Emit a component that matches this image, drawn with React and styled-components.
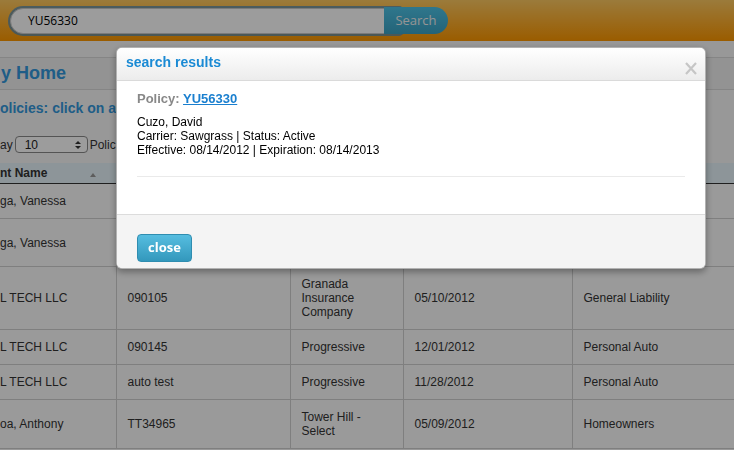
import styled, { createGlobalStyle } from "styled-components";

const GlobalStyle = createGlobalStyle`
  html, body {
    margin: 0;
    padding: 0;
    overflow: hidden;
    background: #f8f8f8;
    font-family: "Liberation Sans", Arial, sans-serif;
  }
`;

const Page = styled.div`
  width: 734px;
  height: 450px;
  overflow: hidden;
  background: #f8f8f8;
`;

const TopBar = styled.header`
  height: 41px;
  display: flex;
  align-items: center;
  padding-left: 10px;
  background: linear-gradient(#fec961, #fc9700);
`;

const SearchField = styled.div`
  width: 392px;
  height: 26px;
  display: flex;
  align-items: center;
  padding-left: 17px;
  box-sizing: border-box;
  background: #fff;
  border: 1px solid #c9c9c9;
  border-radius: 13px 3px 3px 13px;
  box-shadow: 0 0 0 2px rgba(90, 140, 175, 0.8);
  font-family: "Open Sans", sans-serif;
  font-size: 12px;
  color: #000;
`;

const SearchButton = styled.button`
  position: relative;
  margin-left: -18px;
  width: 64px;
  height: 27px;
  border: 0;
  border-radius: 0 14px 14px 0;
  background: linear-gradient(#4ec3e6, #3aa2c4);
  color: #f2f2f2;
  font-family: "Open Sans", sans-serif;
  font-size: 13px;
  padding: 0 0 1px;
`;

const Content = styled.main`
  padding-top: 16px;
`;

const TitleBar = styled.div`
  height: 31px;
  display: flex;
  align-items: center;
  background: #f0f0f0;
  border-top: 1px solid #d9d9d9;
  border-bottom: 1px solid #d9d9d9;
`;

const PageTitle = styled.h1`
  margin: 0;
  font-size: 18px;
  font-weight: bold;
  color: #3399dd;
  padding-left: 1px;
`;

const Subtitle = styled.h2`
  margin: 9px 0 0;
  font-size: 14px;
  line-height: 18px;
  font-weight: bold;
  color: #3399dd;
`;

const DisplayRow = styled.div`
  margin-top: 18px;
  height: 19px;
  display: flex;
  align-items: center;
  gap: 2px;
  font-size: 12px;
  color: #333;
`;

const SelectBox = styled.div`
  width: 73px;
  height: 17px;
  box-sizing: border-box;
  display: flex;
  align-items: center;
  justify-content: space-between;
  padding: 0 6px 0 9px;
  background: #fff;
  border: 1px solid #8a8a8a;
  border-radius: 4px;
  font-size: 12px;
  color: #222;
`;

const Arrows = styled.span`
  display: flex;
  flex-direction: column;
  gap: 2px;

  &::before,
  &::after {
    content: "";
    border-left: 3px solid transparent;
    border-right: 3px solid transparent;
  }
  &::before {
    border-bottom: 3px solid #333;
  }
  &::after {
    border-top: 3px solid #333;
  }
`;

const Table = styled.table`
  margin-top: 9px;
  border-collapse: collapse;
  width: 800px;
  table-layout: fixed;
  font-size: 12px;
  color: #333;
`;

const Th = styled.th`
  height: 20px;
  padding: 0;
  text-align: left;
  font-weight: bold;
  background: #e6f4fa;
  border-bottom: 1px solid #333;
`;

const HeadInner = styled.div`
  display: flex;
  align-items: center;
  justify-content: space-between;
  padding-right: 20px;
`;

const SortUp = styled.span`
  width: 0;
  height: 0;
  margin-top: 3px;
  border-left: 3px solid transparent;
  border-right: 3px solid transparent;
  border-bottom: 4px solid #999;
`;

const Tr = styled.tr`
  height: ${(p) => p.$h || 35}px;
`;

const Td = styled.td`
  padding: 10px 11px;
  line-height: 14px;
  vertical-align: middle;
  border: 1px solid #d0d0d0;
  border-top: 0;
  background: #fcfcfc;

  &:first-child {
    padding-left: 0;
    border-left: 0;
  }
`;

const Backdrop = styled.div`
  position: fixed;
  inset: 0;
  background: rgba(0, 0, 0, 0.39);
`;

const Modal = styled.div`
  position: fixed;
  top: 47px;
  left: 116px;
  width: 590px;
  box-sizing: border-box;
  background: #fff;
  border: 1px solid rgba(0, 0, 0, 0.3);
  border-radius: 6px;
  box-shadow: 0 3px 7px rgba(0, 0, 0, 0.35);
  overflow: hidden;
  font-family: "Liberation Sans", Arial, sans-serif;
`;

const ModalHeader = styled.div`
  height: 32px;
  display: flex;
  align-items: center;
  justify-content: space-between;
  padding: 0 8px 0 9px;
  background: linear-gradient(#ffffff, #ececec);
  border-bottom: 1px solid #dadada;
`;

const ModalTitle = styled.h3`
  margin: 0 0 5px;
  font-size: 14px;
  font-weight: bold;
  color: #1a8ad4;
`;

const CloseX = styled.svg`
  width: 12px;
  height: 13px;
  margin-top: 9px;
`;

const ModalBody = styled.div`
  padding: 9px 20px 37px;
`;

const PolicyLine = styled.div`
  font-size: 13px;
  line-height: 18px;
  font-weight: bold;
  color: #888;

  a {
    color: #1a7fcf;
    text-decoration: underline;
  }
`;

const Details = styled.div`
  margin-top: 7px;
  font-size: 12px;
  line-height: 14px;
  color: #000;
`;

const Divider = styled.hr`
  margin: 19px 0 0;
  border: 0;
  border-top: 1px solid #eaeaea;
`;

const ModalFooter = styled.div`
  height: 54px;
  display: flex;
  align-items: center;
  padding: 12px 20px 0;
  box-sizing: border-box;
  background: #f4f4f4;
  border-top: 1px solid #dcdcdc;
`;

const CloseButton = styled.button`
  width: 55px;
  height: 28px;
  border: 1px solid #2f8db0;
  border-radius: 4px;
  background: linear-gradient(#56bde0, #3398bc);
  color: #fff;
  font-family: "Open Sans", sans-serif;
  font-size: 13px;
  font-weight: bold;
  padding: 0 0 2px;
`;

const rows = [
  { name: "ga, Vanessa", num: "", carrier: "", date: "", type: "", h: 35 },
  { name: "ga, Vanessa", num: "", carrier: "", date: "", type: "", h: 48 },
  { name: "L TECH LLC", num: "090105", carrier: "Granada Insurance Company", date: "05/10/2012", type: "General Liability" },
  { name: "L TECH LLC", num: "090145", carrier: "Progressive", date: "12/01/2012", type: "Personal Auto" },
  { name: "L TECH LLC", num: "auto test", carrier: "Progressive", date: "11/28/2012", type: "Personal Auto" },
  { name: "oa, Anthony", num: "TT34965", carrier: "Tower Hill - Select", date: "05/09/2012", type: "Homeowners" },
];

export default function App() {
  return (
    <Page>
      <GlobalStyle />
      <TopBar>
        <SearchField>YU56330</SearchField>
        <SearchButton>Search</SearchButton>
      </TopBar>
      <Content>
        <TitleBar>
          <PageTitle>y Home</PageTitle>
        </TitleBar>
        <Subtitle>olicies: click on a policy to view its details</Subtitle>
        <DisplayRow>
          ay
          <SelectBox>
            10
            <Arrows />
          </SelectBox>
          Policies
        </DisplayRow>
        <Table>
          <colgroup>
            <col style={{ width: 116 }} />
            <col style={{ width: 174 }} />
            <col style={{ width: 113 }} />
            <col style={{ width: 169 }} />
            <col style={{ width: 228 }} />
          </colgroup>
          <thead>
            <tr>
              <Th>
                <HeadInner>
                  nt Name
                  <SortUp />
                </HeadInner>
              </Th>
              <Th>Policy #</Th>
              <Th>Carrier</Th>
              <Th>Effective</Th>
              <Th>Type</Th>
            </tr>
          </thead>
          <tbody>
            {rows.map((r, i) => (
              <Tr key={i} $h={r.h}>
                <Td>{r.name}</Td>
                <Td>{r.num}</Td>
                <Td>{r.carrier}</Td>
                <Td>{r.date}</Td>
                <Td>{r.type}</Td>
              </Tr>
            ))}
          </tbody>
        </Table>
      </Content>

      <Backdrop />
      <Modal>
        <ModalHeader>
          <ModalTitle>search results</ModalTitle>
          <CloseX viewBox="0 0 12 13">
            <path d="M1 1 L11 12 M11 1 L1 12" stroke="#c6c6c6" strokeWidth="2.2" />
          </CloseX>
        </ModalHeader>
        <ModalBody>
          <PolicyLine>
            Policy: <a href="#">YU56330</a>
          </PolicyLine>
          <Details>
            Cuzo, David
            <br />
            Carrier: Sawgrass | Status: Active
            <br />
            Effective: 08/14/2012 | Expiration: 08/14/2013
          </Details>
          <Divider />
        </ModalBody>
        <ModalFooter>
          <CloseButton>close</CloseButton>
        </ModalFooter>
      </Modal>
    </Page>
  );
}
